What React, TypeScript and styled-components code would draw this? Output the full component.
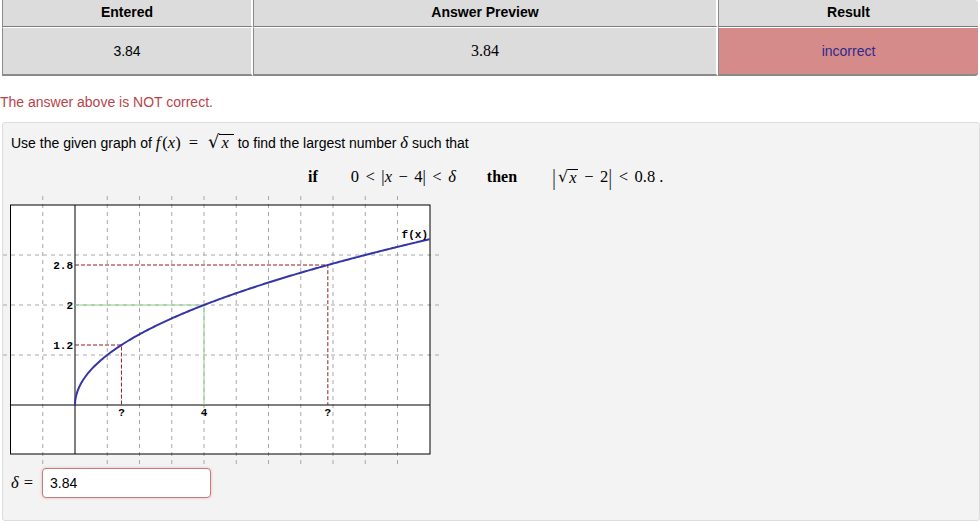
import styled, { createGlobalStyle } from "styled-components";

const GlobalStyle = createGlobalStyle`
  body {
    margin: 0;
    background: #ffffff;
    font-family: "Liberation Sans", Arial, sans-serif;
    font-size: 14px;
    color: #000;
  }
`;

const UX = 32.25;
const UY = 50;
const OX = 72;
const OY = 209;

const px = (x: number) => OX + x * UX;
const py = (y: number) => OY - y * UY;

const curve = Array.from({ length: 221 }, (_, i) => {
  const x = (i / 220) * 11;
  const t = x < 0.5 ? Math.pow(x / 0.5, 2) * 0.5 : x;
  return `${px(t).toFixed(2)},${py(Math.sqrt(t)).toFixed(2)}`;
}).join(" ");

const Graph = () => (
  <GraphSvg width={440} height={268} viewBox="0 0 440 268">
    <rect x={7.5} y={9} width={419.5} height={249} fill="#fff" />
    {[-1, 1, 2, 3, 4, 5, 6, 7, 8, 9, 10].map((k) => (
      <line
        key={`v${k}`}
        x1={px(k)}
        x2={px(k)}
        y1={0}
        y2={268}
        stroke="#a8a8a8"
        strokeDasharray="4 4"
      />
    ))}
    {[1, 2, 3].map((j) => (
      <line
        key={`h${j}`}
        x1={0}
        x2={438}
        y1={py(j)}
        y2={py(j)}
        stroke="#a8a8a8"
        strokeDasharray="4 4"
      />
    ))}
    <rect
      x={7.5}
      y={9}
      width={419.5}
      height={249}
      fill="none"
      stroke="#000"
      strokeWidth={1}
    />
    <line x1={OX} x2={OX} y1={9} y2={258} stroke="#000" />
    <line x1={7.5} x2={427} y1={OY} y2={OY} stroke="#000" />

    <polyline
      points={`${px(0)},${py(2)} ${px(4)},${py(2)} ${px(4)},${OY}`}
      fill="none"
      stroke="#8fd18f"
    />
    <polyline
      points={`${px(0)},${py(2.8)} ${px(7.84)},${py(2.8)} ${px(7.84)},${OY}`}
      fill="none"
      stroke="#8b2020"
      strokeDasharray="4 2"
    />
    <polyline
      points={`${px(0)},${py(1.2)} ${px(1.44)},${py(1.2)} ${px(1.44)},${OY}`}
      fill="none"
      stroke="#8b2020"
      strokeDasharray="4 2"
    />

    <polyline points={curve} fill="none" stroke="#3535a8" strokeWidth={2} />

    <GraphLabel x={OX - 2} y={py(2.8) + 4} textAnchor="end">
      2.8
    </GraphLabel>
    <GraphLabel x={OX - 2} y={py(2) + 4} textAnchor="end">
      2
    </GraphLabel>
    <GraphLabel x={OX - 2} y={py(1.2) + 4} textAnchor="end">
      1.2
    </GraphLabel>
    <GraphLabel x={px(1.44)} y={OY + 11} textAnchor="middle">
      ?
    </GraphLabel>
    <GraphLabel x={px(4)} y={OY + 11} textAnchor="middle">
      4
    </GraphLabel>
    <GraphLabel x={px(7.84)} y={OY + 11} textAnchor="middle">
      ?
    </GraphLabel>
    <GraphLabel x={425} y={42} textAnchor="end">
      f(x)
    </GraphLabel>
  </GraphSvg>
);

const Sqrt = ({ children }: { children: React.ReactNode }) => (
  <SqrtWrap>
    <Radical>√</Radical>
    <Radicand>{children}</Radicand>
  </SqrtWrap>
);

export default function App() {
  return (
    <>
      <GlobalStyle />
      <ResultsTable>
        <colgroup>
          <col style={{ width: 251 }} />
          <col style={{ width: 465 }} />
          <col />
        </colgroup>
        <thead>
          <tr>
            <HeadCell>Entered</HeadCell>
            <HeadCell>Answer Preview</HeadCell>
            <HeadCell>Result</HeadCell>
          </tr>
        </thead>
        <tbody>
          <tr>
            <BodyCell>3.84</BodyCell>
            <BodyCell>
              <MathNum>3.84</MathNum>
            </BodyCell>
            <BodyCell $wrong>incorrect</BodyCell>
          </tr>
        </tbody>
      </ResultsTable>

      <Message>The answer above is NOT correct.</Message>

      <Problem>
        <Prompt>
          Use the given graph of <Mi>f</Mi>
          <Mo>(</Mo>
          <Mi>x</Mi>
          <Mo>)</Mo>
          <Rel>=</Rel>
          <Sqrt>
            <Mi>x</Mi>
          </Sqrt>{" "}
          to find the largest number <Mi>δ</Mi> such that
        </Prompt>

        <Condition>
          <Word>if</Word>
          <Expr>
            <Mo>0</Mo>
            <Rel>&lt;</Rel>
            <Mo>|</Mo>
            <Mi>x</Mi>
            <Rel>−</Rel>
            <Mo>4</Mo>
            <Mo>|</Mo>
            <Rel>&lt;</Rel>
            <Mi>δ</Mi>
          </Expr>
          <Word $wide>then</Word>
          <Expr>
            <Bar>|</Bar>
            <Sqrt>
              <Mi>x</Mi>
            </Sqrt>
            <Rel>−</Rel>
            <Mo>2</Mo>
            <Bar>|</Bar>
            <Rel>&lt;</Rel>
            <Mo>0.8&nbsp;.</Mo>
          </Expr>
        </Condition>

        <Graph />

        <AnswerRow>
          <Mi>δ</Mi>
          <Rel>=</Rel>
          <AnswerInput defaultValue="3.84" />
        </AnswerRow>
      </Problem>
    </>
  );
}

const ResultsTable = styled.table`
  width: 976px;
  margin-left: 2px;
  border-collapse: separate;
  border-spacing: 0;
  table-layout: fixed;
`;

const HeadCell = styled.th`
  height: 24px;
  padding: 0 0 2px;
  background: #dcdcdc;
  font-weight: bold;
  font-size: 14px;
  text-align: center;
  vertical-align: middle;
  border-left: 1px solid #8a8a8a;
  border-right: 2px solid #fff;
  border-bottom: 1px solid #7c7c7c;
  &:last-child {
    border-right: 0;
    border-top-right-radius: 3px;
  }
`;

const BodyCell = styled.td<{ $wrong?: boolean }>`
  height: 46px;
  padding: 0;
  background: ${({ $wrong }) => ($wrong ? "#d68b8b" : "#dcdcdc")};
  color: ${({ $wrong }) => ($wrong ? "#2c2a8c" : "#000")};
  font-size: 14px;
  text-align: center;
  vertical-align: middle;
  border-top: 1px solid #fff;
  border-left: 1px solid #8a8a8a;
  border-right: 2px solid #fff;
  border-bottom: 2px solid #8a8a8a;
  &:last-child {
    border-right: 0;
    border-bottom-right-radius: 3px;
  }
`;

const MathNum = styled.span`
  font-family: "Liberation Serif", "DejaVu Serif", serif;
  font-size: 16px;
`;

const Message = styled.div`
  margin: 18px 0 0;
  line-height: 16px;
  color: #b9434a;
  font-size: 14px;
`;

const Mi = styled.span`
  font-family: "Liberation Serif", "DejaVu Serif", serif;
  font-style: italic;
  font-size: 16.5px;
`;

const Mo = styled.span`
  font-family: "Liberation Serif", "DejaVu Serif", serif;
  font-size: 16.5px;
`;

const Rel = styled.span`
  font-family: "Liberation Serif", "DejaVu Serif", serif;
  font-size: 16.5px;
  margin: 0 6.5px;
`;

const Bar = styled.span`
  font-family: "Liberation Serif", "DejaVu Serif", serif;
  font-size: 20px;
  color: #333;
  transform: scaleY(1.15);
  display: inline-block;
  margin: 0;
`;

const SqrtWrap = styled.span`
  display: inline-flex;
  align-items: flex-end;
  margin-left: 2px;
`;

const Radical = styled.span`
  font-family: "DejaVu Serif", serif;
  font-size: 16px;
  line-height: 18px;
`;

const Radicand = styled.span`
  border-top: 1px solid #000;
  line-height: 15px;
  padding: 0 1px;
`;

const Problem = styled.div`
  margin: 12px 0 0 2px;
  padding: 10px 8px 22px;
  background: #f3f3f3;
  border: 1px solid #dddddd;
  border-radius: 3px;
  height: 365px;
`;

const Prompt = styled.div`
  line-height: 18px;
  font-size: 14px;

  ${Rel} {
    margin: 0 8px;
  }
  ${Mi}:first-of-type {
    margin-right: 2px;
  }
  ${Radical} {
    font-size: 18px;
  }
  ${Radicand} {
    padding: 0 3px 0 2px;
  }
`;

const Condition = styled.div`
  display: flex;
  align-items: center;
  height: 22px;
  margin: 14px 0 8px;
  padding-left: 297px;
  white-space: nowrap;
`;

const Word = styled.span<{ $wide?: boolean }>`
  font-family: "Liberation Serif", "DejaVu Serif", serif;
  font-size: 16px;
  font-weight: bold;
  margin-left: ${({ $wide }) => ($wide ? "31px" : "0")};
  margin-right: ${({ $wide }) => ($wide ? "35px" : "33px")};
`;

const Expr = styled.span`
  display: inline-flex;
  align-items: center;
`;

const GraphSvg = styled.svg`
  display: block;
  margin-left: -8px;
`;

const GraphLabel = styled.text`
  font-family: "Liberation Mono", "DejaVu Sans Mono", monospace;
  font-weight: bold;
  font-size: 11px;
  fill: #000;
`;

const AnswerRow = styled.div`
  display: flex;
  align-items: center;
  margin-top: 4px;

  ${Rel} {
    margin: 0 5px;
  }
`;

const AnswerInput = styled.input`
  box-sizing: border-box;
  width: 169px;
  height: 30px;
  margin-left: 4px;
  padding: 0 7px;
  font-family: "Liberation Sans", Arial, sans-serif;
  font-size: 14px;
  color: #000;
  background: #fff;
  border: 1px solid #c97a7a;
  border-radius: 4px;
  box-shadow: 0 0 3px rgba(200, 80, 80, 0.35);
  outline: none;
`;
